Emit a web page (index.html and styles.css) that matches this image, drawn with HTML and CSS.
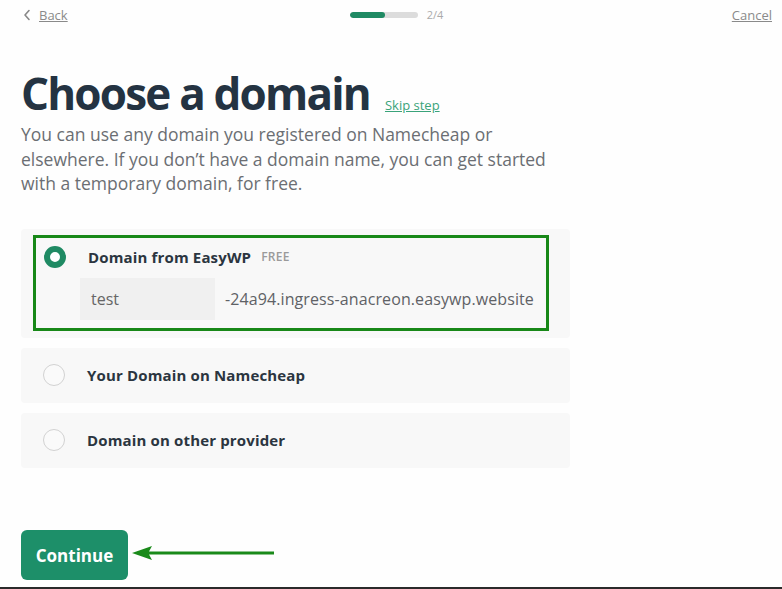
FILE: index.html
```html
<!DOCTYPE html>
<html>
<head>
<meta charset="utf-8">
<link rel="stylesheet" href="styles.css">
</head>
<body>
<div class="page">
  <header class="topbar">
    <a class="back" href="#"><svg class="chev" width="8" height="12" viewBox="0 0 8 12"><path d="M6 1.5 L2 6 L6 10.5" fill="none" stroke="#888" stroke-width="1.6" stroke-linecap="round" stroke-linejoin="round"/></svg><span class="link">Back</span></a>
    <div class="progress">
      <div class="track"><div class="fill" style="width:52%"></div></div>
      <span class="step">2/4</span>
    </div>
    <a class="cancel link" href="#">Cancel</a>
  </header>

  <main class="main">
    <div class="title-row">
      <h1 class="title">Choose a domain</h1>
      <a class="skip" href="#">Skip step</a>
    </div>
    <p class="lead">You can use any domain you registered on Namecheap or elsewhere. If you don’t have a domain name, you can get started with a temporary domain, for free.</p>

    <div class="options">
      <div class="card card-selected">
        <div class="highlight">
          <div class="opt-row">
            <span class="radio radio-on"></span>
            <span class="opt-title">Domain from EasyWP</span>
            <span class="badge">FREE</span>
          </div>
          <div class="domain-row">
            <div class="input">test</div>
            <span class="suffix">-24a94.ingress-anacreon.easywp.website</span>
          </div>
        </div>
      </div>
      <div class="card">
        <div class="opt-row">
          <span class="radio"></span>
          <span class="opt-title">Your Domain on Namecheap</span>
        </div>
      </div>
      <div class="card">
        <div class="opt-row">
          <span class="radio"></span>
          <span class="opt-title">Domain on other provider</span>
        </div>
      </div>
    </div>

    <div class="actions">
      <button class="btn">Continue</button>
      <svg class="arrow" width="142" height="16" viewBox="0 0 142 16"><path d="M0 8 L20 1 L17 6.5 L142 6.5 L142 9.5 L17 9.5 L20 15 Z" fill="#1a8a1a"/></svg>
    </div>
  </main>
</div>
</body>
</html>
```
FILE: styles.css
```css
* { box-sizing: border-box; }
html, body { margin: 0; padding: 0; }
body {
  width: 782px;
  height: 589px;
  background: #fefefe;
  font-family: "Open Sans", "Noto Sans", sans-serif;
  color: #2b3540;
  overflow: hidden;
}
.page {
  height: 589px;
  border-bottom: 2px solid #2a2a2a;
  display: flex;
  flex-direction: column;
}
.topbar {
  display: flex;
  align-items: center;
  justify-content: space-between;
  padding: 3px 10px 0 23px;
  height: 26px;
  font-size: 13px;
  color: #8a8a8a;
}
.link { text-decoration: underline; color: #8a8a8a; }
.back { display: flex; align-items: center; gap: 8px; text-decoration: none; }
.chev { display: block; }
.progress {
  display: flex;
  align-items: center;
  gap: 9px;
  margin-left: 282px;
}
.track {
  width: 68px;
  height: 6px;
  border-radius: 3px;
  background: #dcdcdc;
  overflow: hidden;
}
.fill { height: 100%; background: #1f8a63; border-radius: 3px; }
.step { font-size: 11px; color: #aaa; }
.cancel { margin-left: auto; }

.main { padding: 0 0 0 21px; display: flex; flex-direction: column; flex: 1; }
.title-row {
  display: flex;
  align-items: baseline;
  gap: 15px;
  margin-top: 39px;
}
.title {
  margin: 0;
  font-size: 44px;
  font-weight: 700;
  letter-spacing: -1.8px;
  color: #243342;
  line-height: 56px;
}
.skip {
  color: #3aa37a;
  font-size: 13px;
  text-decoration: underline;
}
.lead {
  margin: 1px 0 0 0;
  width: 540px;
  font-size: 17.5px;
  line-height: 24.5px;
  color: #6b6e73;
}
.options {
  margin-top: 33px;
  width: 549px;
  display: flex;
  flex-direction: column;
  gap: 10px;
}
.card {
  background: #f8f8f8;
  border-radius: 4px;
  padding: 0 12px 0 22px;
  height: 55px;
  display: flex;
  align-items: center;
}
.card-selected {
  height: 109px;
  padding: 6px 21px 7px 12px;
  align-items: stretch;
}
.highlight {
  flex: 1;
  border: 3px solid #188818;
  padding: 8px 0 0 8px;
}
.opt-row { display: flex; align-items: center; }
.radio {
  width: 22px;
  height: 22px;
  border-radius: 50%;
  border: 1.5px solid #d2d2d2;
  background: #fafafa;
  margin-right: 22px;
  flex: none;
}
.radio-on {
  border: 6.5px solid #1f8a63;
  background: #fff;
}
.opt-title {
  font-size: 15px;
  font-weight: 700;
  color: #2b3540;
  letter-spacing: 0.15px;
}
.badge {
  font-size: 12px;
  color: #9a9a9a;
  margin-left: 10px;
  font-weight: 600;
  letter-spacing: 0.3px;
}
.domain-row {
  display: flex;
  align-items: center;
  margin-top: 10px;
  margin-left: 36px;
}
.input {
  width: 135px;
  height: 42px;
  background: #f0f0f0;
  font-size: 16px;
  color: #666;
  padding-left: 11px;
  display: flex;
  align-items: center;
}
.suffix {
  margin-left: 10px;
  font-size: 16px;
  color: #5f6266;
  letter-spacing: 0.1px;
}
.actions {
  margin-top: auto;
  margin-bottom: 7px;
  display: flex;
  align-items: center;
  gap: 4px;
}
.btn {
  width: 107px;
  height: 50px;
  border: none;
  border-radius: 6px;
  background: #1d8f69;
  color: #fff;
  font-family: inherit;
  font-size: 17px;
  font-weight: 700;
}
.arrow { display: block; margin-top: -4px; }
```
